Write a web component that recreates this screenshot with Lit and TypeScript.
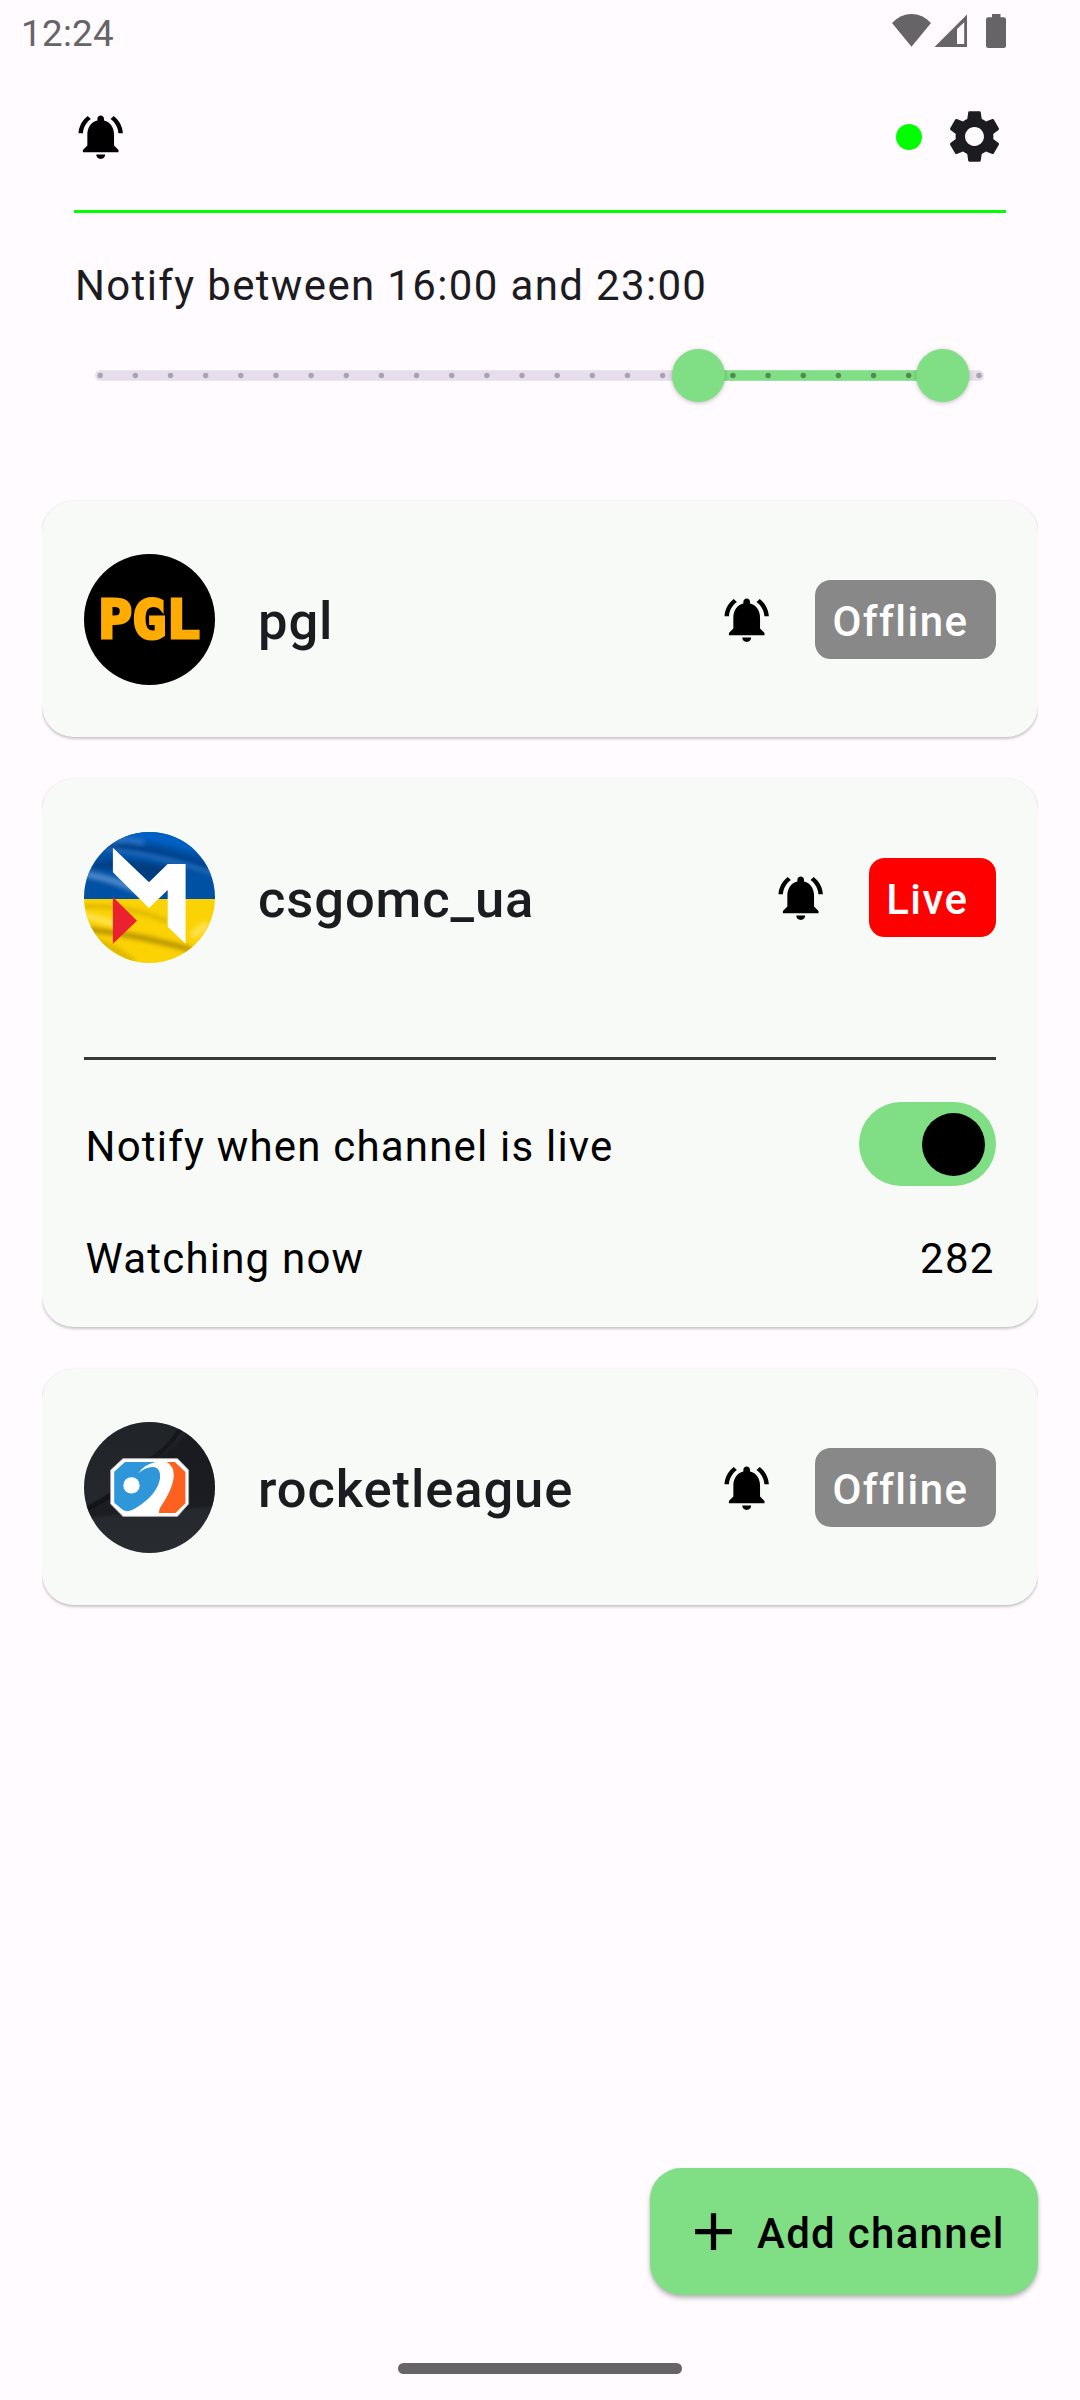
import { LitElement, html, css, svg, nothing } from "lit";
import { customElement, property } from "lit/decorators.js";
import { classMap } from "lit/directives/class-map.js";

const BELL =
  "M7.58 4.08L6.15 2.65C3.75 4.48 2.17 7.3 2.03 10.5h2c.15-2.65 1.51-4.97 3.55-6.42zm12.39 6.42h2c-.15-3.2-1.73-6.02-4.12-7.85l-1.42 1.43c2.02 1.45 3.39 3.77 3.54 6.42zM18 11c0-3.07-1.64-5.64-4.5-6.32V4c0-.83-.67-1.5-1.5-1.5s-1.5.67-1.5 1.5v.68C7.63 5.36 6 7.92 6 11v5l-2 2v1h16v-1l-2-2v-5zm-6 11c.14 0 .27-.01.4-.04.65-.14 1.18-.58 1.44-1.18.1-.24.15-.5.15-.78h-4c.01 1.1.9 2 2.01 2z";

const GEAR =
  "M19.14 12.94c.04-.3.06-.61.06-.94 0-.32-.02-.64-.07-.94l2.03-1.58c.18-.14.23-.41.12-.61l-1.92-3.32c-.12-.22-.37-.29-.59-.22l-2.39.96c-.5-.38-1.03-.7-1.62-.94L14.4 2.81c-.04-.24-.24-.41-.48-.41h-3.84c-.24 0-.43.17-.47.41L9.25 5.35C8.66 5.59 8.12 5.92 7.63 6.29L5.24 5.33c-.22-.08-.47 0-.59.22L2.74 8.87c-.12.21-.08.47.12.61l2.03 1.58C4.84 11.36 4.8 11.69 4.8 12s.02.64.07.94l-2.03 1.58c-.18.14-.23.41-.12.61l1.92 3.32c.12.22.37.29.59.22l2.39-.96c.5.38 1.03.7 1.62.94l.36 2.54c.05.24.24.41.48.41h3.84c.24 0 .44-.17.47-.41l.36-2.54c.59-.24 1.13-.56 1.62-.94l2.39.96c.22.08.47 0 .59-.22l1.92-3.32c.12-.22.07-.47-.12-.61L19.14 12.94zM12 15.6c-1.98 0-3.6-1.62-3.6-3.6s1.62-3.6 3.6-3.6 3.6 1.62 3.6 3.6-1.62 3.6-3.6 3.6z";

const bellIcon = html`<svg width="53.4" height="53.4" viewBox="0 0 24 24"><path d=${BELL} /></svg>`;

const avatars: Record<string, unknown> = {
  pgl: svg`
    <circle cx="65.5" cy="65.5" r="65.5" fill="#000" />
    <text x="14.2" y="84.4" font-family="DejaVu Sans Mono, monospace" font-weight="700" font-size="52.5"
      textLength="102" lengthAdjust="spacingAndGlyphs" fill="#ffab00" stroke="#ffab00" stroke-width="3"
      stroke-linejoin="miter">PGL</text>`,
  csgomc_ua: svg`
    <defs>
      <clipPath id="flag"><circle cx="65.5" cy="65.5" r="65.5" /></clipPath>
      <filter id="fold" x="-20%" y="-20%" width="140%" height="140%"><feGaussianBlur stdDeviation="2.2" /></filter>
    </defs>
    <g clip-path="url(#flag)">
      <rect width="131" height="67" fill="#0050a4" />
      <g filter="url(#fold)" fill="none">
        <path d="M22 2q50-2 90 14" stroke="#0060c4" stroke-width="11" />
        <path d="M24 10q16-4 36 1" stroke="#2f74c2" stroke-width="4" />
        <path d="M20 14Q70 14 125 34" stroke="#00418a" stroke-width="5" />
        <path d="M20 17Q70 22 131 42" stroke="#2a70bf" stroke-width="3" />
        <path d="M14 30Q50 26 92 36L70 52Q40 34 6 36z" fill="#003d80" />
        <path d="M0 42Q30 46 60 62" stroke="#4a86c8" stroke-width="7" />
      </g>
      <rect y="67" width="131" height="64" fill="#fbd204" />
      <g filter="url(#fold)" fill="none">
        <path d="M0 74Q50 74 84 90" stroke="#dcb504" stroke-width="4" />
        <path d="M0 83Q18 88 40 94" stroke="#ffe44e" stroke-width="6" />
        <path d="M0 97Q60 103 118 121" stroke="#bb9803" stroke-width="6" />
        <path d="M8 108Q30 114 50 131" stroke="#dfb900" stroke-width="7" />
        <path d="M108 104L124 92" stroke="#ffe04a" stroke-width="9" />
      </g>
      <path fill="#fff" d="M28.9 15.7L65 50.3 83.7 32h17.9v79.7l-17.9-17V58L65 76 28.9 40.3z" />
      <path fill="#ea212e" d="M28.9 65L53 88.7 28.9 111.7z" />
    </g>`,
  rocketleague: svg`
    <defs>
      <clipPath id="disc"><circle cx="65.5" cy="65.5" r="65.5" /></clipPath>
      <linearGradient id="slate" x1="0" y1="0" x2="0" y2="1">
        <stop offset="0" stop-color="#202327" /><stop offset="1" stop-color="#282b30" />
      </linearGradient>
      <filter id="soft"><feGaussianBlur stdDeviation="1" /></filter>
    </defs>
    <g clip-path="url(#disc)">
      <rect width="131" height="131" fill="url(#slate)" />
      <path d="M131 0L103 10Q84 32 62 42L26 72 0 86V96L131 84z" fill="#17191b" opacity=".6" filter="url(#soft)" />
      <path d="M97 6Q84 28 62 40M28 72Q14 82 0 88" fill="none" stroke="#08090a" stroke-width="2.2" filter="url(#soft)" />
      <path d="M39 36.6h54.4L104.6 48v34L93.4 94.4H39L26.6 82V48z" fill="#fff" stroke="#a9a4a8" stroke-width="1" />
      <path d="M41 40H71.6Q60 42.5 54.3 51.2Q62 45 68.5 45C75 45.4 76.5 50 76 56C74.5 69 62 81 48 88Q43 90.3 39 88L30.2 80.7V49.7z" fill="#2f96da" />
      <circle cx="47.5" cy="63.4" r="8.2" fill="#fff" />
      <path d="M82.7 40h8.2L101.4 50V81.3L91.5 91H75Q74.6 89 76 86C84 74 89 64 89.8 54Q90 44 82.7 40z" fill="#fd611f" />
    </g>`,
};

@customElement("status-bar")
class StatusBar extends LitElement {
  static styles = css`
    :host { display: flex; justify-content: space-between; height: 63px; padding: 0 74px 0 21px; box-sizing: border-box; color: #676468; }
    .time { font-size: 36.75px; line-height: 43px; padding-top: 12px; letter-spacing: 0.3px; }
    .icons { display: flex; padding-top: 14px; }
  `;
  render() {
    return html`
      <span class="time">12:24</span>
      <span class="icons">
        <svg width="114" height="34" viewBox="0 0 114 34" fill="#676468">
          <path d="M0 9Q8.500 0 19.500 0T39 9L19.500 32.700z" />
          <path fill-rule="evenodd" d="M42.500 32.900L75 .5v32.400zM65 30h7.200V8.300L65 15z" />
          <path d="M100 0h8.500v3.200h3.200q2.300 0 2.300 2.300v26.200q0 2.300-2.300 2.300H96.300q-2.300 0-2.300-2.300V5.500q0-2.300 2.300-2.300H100z" />
        </svg>
      </span>`;
  }
}

@customElement("hour-range")
class HourRange extends LitElement {
  @property({ type: Number }) from = 0;
  @property({ type: Number }) to = 24;
  @property({ type: Number }) steps = 25;
  static styles = css`
    :host { display: block; }
    svg { display: block; overflow: visible; }
    .thumb { filter: drop-shadow(0 1px 2px rgba(0, 0, 0, 0.25)); fill: #80df84; }
    .track { stroke: #e6dfeb; stroke-width: 10.5; stroke-linecap: round; }
    .range { stroke: #80df84; stroke-width: 10.5; }
    .tick { fill: #aaa3af; }
    .tick.on { fill: #4f8b52; }
  `;
  render() {
    const at = (i: number) => 5.2 + (i * 878.8) / this.steps;
    const ticks = Array.from({ length: this.steps + 1 }, (_, i) => i);
    return html`<svg width="889" height="63" viewBox="0 0 889 63">
      <line class="track" x1="5.250" x2="883.750" y1="31.500" y2="31.500" />
      <line class="range" x1=${at(this.from)} x2=${at(this.to)} y1="31.500" y2="31.500" />
      ${ticks.map(
        (i) => svg`<circle class=${classMap({ tick: true, on: i > this.from && i < this.to })} cx=${at(i)} cy="31.500" r="2.700" />`
      )}
      <circle class="thumb" cx=${at(this.from)} cy="31.500" r="26.500" />
      <circle class="thumb" cx=${at(this.to)} cy="31.500" r="26.500" />
    </svg>`;
  }
}

@customElement("channel-card")
class ChannelCard extends LitElement {
  @property() name = "";
  @property({ type: Boolean }) live = false;
  @property({ type: Number }) viewers = 0;
  static styles = css`
    :host {
      display: block; box-sizing: border-box; padding: 53px 42px 52px; border-radius: 31.5px;
      background: #f8faf7; box-shadow: 0 2px 3px rgba(0, 0, 0, 0.2), 0 0 3px rgba(0, 0, 0, 0.07);
    }
    :host([live]) { padding-bottom: 37px; }
    svg { display: block; flex: none; }
    .top { display: flex; align-items: center; height: 131px; }
    .name { flex: 1; padding: 3px 0 0 43px; font-size: 52.5px; line-height: 78px; font-weight: 500; letter-spacing: 0.9px; color: #1c1b1f; }
    .badge {
      height: 79px; box-sizing: border-box; margin-left: 42px; padding: 0 27.6px 0 17px; border-radius: 15.75px; overflow: hidden;
      background: #888; color: #fff; font-size: 42px; line-height: 83px; font-weight: 500; letter-spacing: 1.45px;
    }
    .badge.live { background: #f00; }
    .rule { height: 3px; margin: 94px 0 42px; background: #373937; }
    .row { display: flex; align-items: center; justify-content: space-between; height: 84px; color: #000; font-size: 42px; line-height: 63px; letter-spacing: 1.2px; }
    .row .label { padding: 5px 0 0 1.5px; }
    .row.count { height: 63px; margin-top: 41px; padding-right: 1.5px; }
    .row.count .label { padding-top: 0; }
    .switch { display: flex; justify-content: flex-end; align-items: center; width: 137px; height: 84px; box-sizing: border-box; padding-right: 11px; border-radius: 42px; background: #80df84; }
    .knob { width: 63px; height: 63px; border-radius: 50%; background: #000; }
  `;
  render() {
    return html`
      <div class="top">
        <svg width="131" height="131" viewBox="0 0 131 131">${avatars[this.name]}</svg>
        <span class="name">${this.name}</span>
        ${bellIcon}
        <span class=${classMap({ badge: true, live: this.live })}>${this.live ? "Live" : "Offline"}</span>
      </div>
      ${this.live
        ? html`<div class="rule"></div>
            <div class="row"><span class="label">Notify when channel is live</span><span class="switch"><span class="knob"></span></span></div>
            <div class="row count"><span class="label">Watching now</span><span>${this.viewers}</span></div>`
        : nothing}`;
  }
}

@customElement("app-root")
class AppRoot extends LitElement {
  static styles = css`
    :host {
      display: flex; flex-direction: column; width: 1080px; height: 2400px; overflow: hidden;
      background: #fffbff; color: #1c1b1f; font-family: Roboto, "Liberation Sans", sans-serif; white-space: nowrap;
    }
    svg { display: block; }
    .header { display: flex; align-items: center; height: 147px; margin: 0 74px; border-bottom: 3px solid #0f0; }
    .dot { width: 26px; height: 26px; margin: 0 21px 0 auto; border-radius: 50%; background: #0f0; }
    .between { margin: 41px 74px 0 75px; font-size: 42px; line-height: 63px; letter-spacing: 1.35px; }
    .range { margin: 27px 95px 0; }
    .list { display: flex; flex-direction: column; gap: 42px; margin: 94px 42px 0; clip-path: inset(-10px 0); }
    .fab {
      display: flex; align-items: center; align-self: flex-end; box-sizing: border-box; width: 388px; height: 127px;
      margin: auto 42px 68px 0; padding-left: 32px; border-radius: 31.5px; background: #80df84; color: #000;
      font-size: 42px; line-height: 63px; font-weight: 500; letter-spacing: 1.3px;
      box-shadow: 0 3px 5px rgba(0, 0, 0, 0.28), 0 0 2px rgba(0, 0, 0, 0.06);
    }
    .fab span { padding: 3px 0 0 12px; }
    .pill { flex: none; align-self: center; width: 284px; height: 11px; margin-bottom: 26px; border-radius: 5.5px; background: #676468; }
  `;
  render() {
    return html`
      <status-bar></status-bar>
      <div class="header">
        ${bellIcon}
        <span class="dot"></span>
        <svg width="63" height="63" viewBox="0 0 24 24" fill="#1c1b1f"><path d=${GEAR} /></svg>
      </div>
      <div class="between">Notify between 16:00 and 23:00</div>
      <hour-range class="range" from="17.02" to="23.97" steps="25"></hour-range>
      <div class="list">
        <channel-card name="pgl"></channel-card>
        <channel-card name="csgomc_ua" live viewers="282"></channel-card>
        <channel-card name="rocketleague"></channel-card>
      </div>
      <div class="fab">
        <svg width="63" height="63" viewBox="0 0 24 24"><path d="M19 13h-6v6h-2v-6H5v-2h6V5h2v6h6v2z" /></svg>
        <span>Add channel</span>
      </div>
      <div class="pill"></div>`;
  }
}
